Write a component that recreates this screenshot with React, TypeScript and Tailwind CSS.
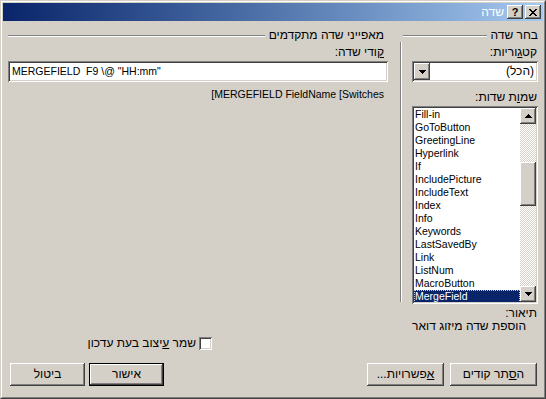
import React from 'react';

const raised =
  'bg-[#d4d0c8] shadow-[inset_-1px_-1px_0_#404040,inset_1px_1px_0_#ffffff,inset_-2px_-2px_0_#808080]';
const sunken =
  'bg-white shadow-[inset_1px_1px_0_#808080,inset_-1px_-1px_0_#ffffff,inset_2px_2px_0_#404040,inset_-2px_-2px_0_#d4d0c8]';
const latin = 'text-[10.5px]';

const fields = [
  'Fill-in',
  'GoToButton',
  'GreetingLine',
  'Hyperlink',
  'If',
  'IncludePicture',
  'IncludeText',
  'Index',
  'Info',
  'Keywords',
  'LastSavedBy',
  'Link',
  'ListNum',
  'MacroButton',
  'MergeField',
];

const ArrowDown = () => (
  <svg width="7" height="4" viewBox="0 0 7 4" shapeRendering="crispEdges">
    <path d="M0 0h7v1H0zM1 1h5v1H1zM2 2h3v1H2zM3 3h1v1H3z" fill="#000" />
  </svg>
);

const ArrowUp = () => (
  <svg width="7" height="4" viewBox="0 0 7 4" shapeRendering="crispEdges">
    <path d="M3 0h1v1H3zM2 1h3v1H2zM1 2h5v1H1zM0 3h7v1H0z" fill="#000" />
  </svg>
);

const GroupHeader = ({ title, className }: { title: string; className?: string }) => (
  <div className={`flex h-[13px] items-center gap-[4px] ${className ?? ''}`}>
    <span className="whitespace-nowrap leading-[13px]">{title}</span>
    <div className="h-0 flex-1 border-t border-b border-t-[#808080] border-b-white" />
  </div>
);

const Button = ({
  children,
  width,
  isDefault,
}: {
  children: React.ReactNode;
  width: string;
  isDefault?: boolean;
}) => (
  <div
    className={`${width} flex h-[23px] items-center justify-center leading-[13px] ${raised} ${
      isDefault ? 'border border-black' : ''
    }`}
  >
    {children}
  </div>
);

const FieldList = () => (
  <div dir="ltr" className={`ml-[9px] flex h-[198px] p-[2px] ${latin} ${sunken}`}>
    <div className="flex flex-1 flex-col overflow-hidden">
      {fields.map((f) => (
        <div
          key={f}
          className={`h-[13px] shrink-0 whitespace-nowrap pl-[1px] leading-[13px] ${
            f === 'MergeField'
              ? 'bg-[#0a246a] text-white outline-1 -outline-offset-1 outline-dotted outline-[#c8c8c8]'
              : 'text-black'
          }`}
        >
          {f}
        </div>
      ))}
    </div>
    <div className="flex w-[16px] flex-col bg-[repeating-conic-gradient(#d4d0c8_0%_25%,#ffffff_0%_50%)] bg-[length:2px_2px]">
      <div className={`flex h-[16px] items-center justify-center ${raised}`}>
        <ArrowUp />
      </div>
      <div className="h-[38px]" />
      <div className={`h-[44px] ${raised}`} />
      <div className="flex-1" />
      <div className={`flex h-[16px] items-center justify-center ${raised}`}>
        <ArrowDown />
      </div>
    </div>
  </div>
);

export default function App() {
  return (
    <div className="font-['Liberation_Sans',Arial,sans-serif] text-[12px] text-black">
      <div className="flex h-[399px] w-[546px] flex-col border border-t-[#d4d0c8] border-l-[#d4d0c8] border-r-[#404040] border-b-[#404040]">
        <div className="flex flex-1 flex-col border border-t-white border-l-white border-r-[#808080] border-b-[#808080] bg-[#d4d0c8] p-[1px]">
          {/* title bar */}
          <div className="flex h-[18px] items-center justify-end bg-linear-to-r from-[#0a246a] to-[#a6caf0]">
            <span dir="rtl" className="text-[12px] leading-[14px] text-white">
              שדה
            </span>
            <div className={`ml-[3px] flex h-[14px] w-[16px] items-center justify-center ${raised}`}>
              <span className="text-[11px] font-bold leading-[11px]">?</span>
            </div>
            <div className={`ml-[2px] mr-[2px] flex h-[14px] w-[16px] items-center justify-center ${raised}`}>
              <svg width="8" height="7" viewBox="0 0 8 7" shapeRendering="crispEdges">
                <path
                  d="M0 0h2v1H0zM6 0h2v1H6zM1 1h2v1H1zM5 1h2v1H5zM2 2h4v1H2zM3 3h2v1H3zM2 4h4v1H2zM1 5h2v1H1zM5 5h2v1H5zM0 6h2v1H0zM6 6h2v1H6z"
                  fill="#000"
                />
              </svg>
            </div>
          </div>

          {/* body */}
          <div dir="rtl" className="flex flex-1 flex-col pl-[5px] pr-[5px] pt-[8px]">
            <div className="flex">
              {/* choose field */}
              <div className="flex w-[135px] flex-col">
                <GroupHeader title="בחר שדה" />
                <div className="mt-[4px] h-[13px] pr-[1px] leading-[13px]">
                  קט<u>ג</u>וריות:
                </div>
                <div className={`ml-[9px] mt-[2px] flex h-[21px] items-center p-[2px] ${sunken}`}>
                  <span className="flex-1 pr-[2px] leading-[13px]">(הכל)</span>
                  <div className={`flex h-[17px] w-[16px] items-center justify-center ${raised}`}>
                    <ArrowDown />
                  </div>
                </div>
                <div className="mt-[9px] h-[13px] pr-[1px] leading-[13px]">
                  שמ<u>ו</u>ת שדות:
                </div>
                <div className="mt-[2px]">
                  <FieldList />
                </div>
                <div className="mt-[3px] h-[13px] pr-[1px] leading-[13px]">תיאור:</div>
                <div className="h-[13px] pr-[12px] leading-[13px]">הוספת שדה מיזוג דואר</div>
              </div>

              <div className="ml-[12px] mr-[1px] mt-[13px] h-[260px] w-0 border-l border-r border-l-[#808080] border-r-white" />

              {/* advanced */}
              <div className="flex flex-1 flex-col">
                <GroupHeader title="מאפייני שדה מתקדמים" className="pr-[4px]" />
                <div className="mt-[4px] h-[13px] pr-[4px] leading-[13px]">
                  <u>ק</u>ודי שדה:
                </div>
                <div dir="ltr" className={`mt-[2px] flex h-[21px] items-center px-[4px] ${latin} ${sunken}`}>
                  <span className="whitespace-pre leading-[13px]">{'MERGEFIELD  F9 \\@ "HH:mm"'}</span>
                </div>
                <div className={`mt-[6px] h-[13px] pr-[4px] leading-[13px] ${latin}`}>
                  <span dir="ltr">[MERGEFIELD FieldName [Switches</span>
                </div>
              </div>
            </div>

            {/* preserve formatting */}
            <div className="mt-[4px] flex h-[13px] items-center gap-[3px] pr-[326px]">
              <div className={`h-[13px] w-[13px] shrink-0 ${sunken}`} />
              <span className="whitespace-nowrap leading-[13px]">
                שמר <u>ע</u>יצוב בעת עדכון
              </span>
            </div>

            {/* buttons */}
            <div className="mt-[13px] flex justify-between pl-[2px] pr-[1px]">
              <div className="flex gap-[6px]">
                <Button width="w-[87px]">
                  ה<u>ס</u>תר קודים
                </Button>
                <Button width="w-[77px]">
                  <u>א</u>פשרויות...
                </Button>
              </div>
              <div className="flex gap-[4px]">
                <Button width="w-[75px]" isDefault>
                  אישור
                </Button>
                <Button width="w-[75px]">ביטול</Button>
              </div>
            </div>
          </div>
        </div>
      </div>
    </div>
  );
}
